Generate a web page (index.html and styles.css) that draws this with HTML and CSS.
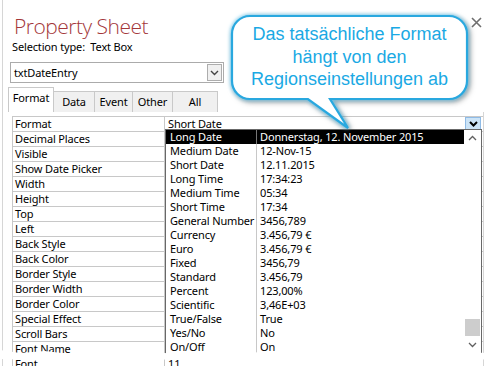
FILE: index.html
```html
<!DOCTYPE html>
<html lang="en">
<head>
  <meta charset="UTF-8" />
  <title>Property Sheet</title>
  <link rel="stylesheet" href="styles.css">
</head>
<body>
  <div class="sheet">
    <h1 class="title">Property Sheet</h1>
    <p class="seltype">Selection type:&nbsp; Text Box</p>

    <div class="combo">
      <span>txtDateEntry</span>
      <span class="combo-btn">
        <svg width="9" height="6" viewBox="0 0 9 6"><path d="M1 1 L4.5 4.5 L8 1" fill="none" stroke="#444" stroke-width="1.4"/></svg>
      </span>
    </div>

    <div class="tabs">
      <div class="tab active" style="width:46px">Format</div>
      <div class="tab" style="width:42px">Data</div>
      <div class="tab" style="width:39px">Event</div>
      <div class="tab" style="width:41px">Other</div>
      <div class="tab" style="width:46px">All</div>
    </div>

    <div class="props">
      <div class="grid">
        <div class="row">
          <div class="k">Format</div>
          <div class="v first">
            <span>Short Date</span>
            <span class="dd-btn">
              <svg width="9" height="6" viewBox="0 0 9 6"><path d="M1 1 L4.5 4.5 L8 1" fill="none" stroke="#000" stroke-width="2"/></svg>
            </span>
          </div>
        </div>
        <div class="row"><div class="k">Decimal Places</div><div class="v"></div></div>
        <div class="row"><div class="k">Visible</div><div class="v"></div></div>
        <div class="row"><div class="k">Show Date Picker</div><div class="v"></div></div>
        <div class="row"><div class="k">Width</div><div class="v"></div></div>
        <div class="row"><div class="k">Height</div><div class="v"></div></div>
        <div class="row"><div class="k">Top</div><div class="v"></div></div>
        <div class="row"><div class="k">Left</div><div class="v"></div></div>
        <div class="row"><div class="k">Back Style</div><div class="v"></div></div>
        <div class="row"><div class="k">Back Color</div><div class="v"></div></div>
        <div class="row"><div class="k">Border Style</div><div class="v"></div></div>
        <div class="row"><div class="k">Border Width</div><div class="v"></div></div>
        <div class="row"><div class="k">Border Color</div><div class="v"></div></div>
        <div class="row"><div class="k">Special Effect</div><div class="v"></div></div>
        <div class="row"><div class="k">Scroll Bars</div><div class="v"></div></div>
        <div class="row"><div class="k">Font Name</div><div class="v"></div></div>
        <div class="row"><div class="k">Font</div><div class="v">11</div></div>
      </div>
    </div>
  </div>

  <!-- open format dropdown -->
  <div class="list">
    <div class="opts">
      <div class="opt sel"><span>Long Date</span><span>Donnerstag, 12. November 2015</span></div>
      <div class="opt"><span>Medium Date</span><span>12-Nov-15</span></div>
      <div class="opt"><span>Short Date</span><span>12.11.2015</span></div>
      <div class="opt"><span>Long Time</span><span>17:34:23</span></div>
      <div class="opt"><span>Medium Time</span><span>05:34</span></div>
      <div class="opt"><span>Short Time</span><span>17:34</span></div>
      <div class="opt"><span>General Number</span><span>3456,789</span></div>
      <div class="opt"><span>Currency</span><span>3.456,79 €</span></div>
      <div class="opt"><span>Euro</span><span>3.456,79 €</span></div>
      <div class="opt"><span>Fixed</span><span>3456,79</span></div>
      <div class="opt"><span>Standard</span><span>3.456,79</span></div>
      <div class="opt"><span>Percent</span><span>123,00%</span></div>
      <div class="opt"><span>Scientific</span><span>3,46E+03</span></div>
      <div class="opt"><span>True/False</span><span>True</span></div>
      <div class="opt"><span>Yes/No</span><span>No</span></div>
      <div class="opt"><span>On/Off</span><span>On</span></div>
    </div>
    <div class="sbar">
      <svg class="arrow" width="9" height="6" viewBox="0 0 9 6"><path d="M1 5 L4.5 1.5 L8 5" fill="none" stroke="#606060" stroke-width="1.3"/></svg>
      <div class="thumb"></div>
      <svg class="arrow" width="9" height="6" viewBox="0 0 9 6"><path d="M1 1 L4.5 4.5 L8 1" fill="none" stroke="#606060" stroke-width="1.3"/></svg>
    </div>
  </div>

  <svg class="close" width="11" height="11" viewBox="0 0 11 11">
    <path d="M1 1 L10 10 M10 1 L1 10" stroke="#6e6e6e" stroke-width="1.6"/>
  </svg>

  <!-- callout -->
  <svg class="bubble" width="262" height="132" viewBox="0 0 262 132">
    <path d="M26 9 H225 A18 18 0 0 1 243 27 V74 A18 18 0 0 1 225 92 H106 L124 121 L84 92 H26 A18 18 0 0 1 8 74 V27 A18 18 0 0 1 26 9 Z"
          fill="#fff" stroke="#29a8df" stroke-width="2.2"/>
  </svg>
  <div class="bubble-text">Das tatsächliche Format<br>hängt von den<br>Regionseinstellungen ab</div>

  <svg class="tear" width="490" height="18" viewBox="0 348 490 18">
    <polygon fill="#fff" points="0,350 20,353 45,351 70,354 95,350 120,353 150,351 180,355 210,352 240,354 270,351 300,354 330,352 360,355 390,351 420,354 450,352 490,353 490,359 460,361 430,358 400,360 370,357 340,360 310,358 280,361 250,358 220,360 190,357 160,360 130,358 100,361 70,358 40,360 0,359"/>
  </svg>
</body>
</html>
```

FILE: styles.css
```css
* {
  box-sizing: border-box;
}

body {
  margin: 0;
  width: 490px;
  height: 366px;
  overflow: hidden;
  background: #fff;
  font-family: "Noto Sans", sans-serif;
  font-size: 11px;
  letter-spacing: -0.15px;
  white-space: nowrap;
  color: #000;
}

.sheet {
  height: 366px;
  margin-left: 2px;
  border-left: 1px solid #d6d6d6;
  padding-top: 12px;
}

.title {
  margin: 0 0 0 11px;
  font-family: "Open Sans", sans-serif;
  font-weight: 300;
  font-size: 21px;
  line-height: 28px;
  letter-spacing: -0.5px;
  color: #a4373a;
}

.seltype {
  margin: 0 0 0 9px;
  line-height: 14px;
}

.combo {
  margin: 8px 0 0 7px;
  width: 214px;
  height: 21px;
  border: 1px solid #ababab;
  display: flex;
  align-items: center;
  justify-content: space-between;
  padding-left: 3px;
}

.combo-btn {
  width: 15px;
  height: 17px;
  margin-right: 1px;
  border: 1px solid #adadad;
  background: #f0f0f0;
  display: flex;
  align-items: center;
  justify-content: center;
}

.tabs {
  display: flex;
  align-items: flex-end;
  margin: 4px 0 0 5px;
  height: 25px;
}

.tab {
  height: 21px;
  border: 1px solid #c9c9c9;
  border-bottom: none;
  background: #f0f0f0;
  text-align: center;
  line-height: 20px;
  margin-right: -1px;
}

.tab.active {
  height: 25px;
  background: #fff;
  line-height: 19px;
  position: relative;
  z-index: 1;
}

.props {
  width: 481px;
  height: 260px;
  border-right: 1px solid #d6d6d6;
  padding: 4px 0 0 9px;
}

.grid {
  border-top: 1px solid #c8c8c8;
  border-left: 1px solid #c8c8c8;
}

.row {
  display: grid;
  grid-template-columns: 152px 1fr;
  height: 15px;
  border-bottom: 1px solid #c8c8c8;
  line-height: 14px;
}

.row .k {
  border-right: 1px solid #c8c8c8;
  padding-left: 2px;
}

.row .v {
  padding-left: 3px;
}

.row .first {
  display: flex;
  justify-content: space-between;
  padding-right: 2px;
}

.dd-btn {
  width: 16px;
  height: 14px;
  background: #cce4f7;
  border: 1px solid #8fbbe6;
  display: flex;
  align-items: center;
  justify-content: center;
}

.list {
  position: absolute;
  left: 165px;
  top: 129px;
  width: 317px;
  height: 227px;
  border: 1px solid #686868;
  background: #fff;
  display: flex;
}

.opts {
  flex: 1;
}

.opt {
  display: grid;
  grid-template-columns: 91px 1fr;
  height: 14px;
  line-height: 14px;
}

.opt span {
  overflow: hidden;
}

.opt span:first-child {
  padding-left: 4px;
  border-right: 1px solid #c8c8c8;
}

.opt span:last-child {
  padding-left: 3px;
}

.opt.sel {
  background: #000;
  color: #fff;
}

.opt.sel span:first-child {
  border-right-color: #777;
}

.sbar {
  width: 17px;
  display: flex;
  flex-direction: column;
  align-items: center;
  padding: 5px 0 4px;
}

.thumb {
  width: 15px;
  height: 17px;
  background: #cdcdcd;
  margin: 178px 0 6px;
}

.close {
  position: absolute;
  left: 471px;
  top: 17px;
}

.bubble {
  position: absolute;
  left: 224px;
  top: 7px;
  filter: drop-shadow(0 0 2px #5cc6f2) drop-shadow(2px 2px 2px rgba(0, 0, 0, 0.35));
}

.bubble-text {
  position: absolute;
  left: 232px;
  top: 23px;
  width: 235px;
  text-align: center;
  font-family: "Liberation Sans", Arial, sans-serif;
  font-size: 18px;
  line-height: 22.5px;
  letter-spacing: 0;
  color: #1aa9e4;
}

.tear {
  position: absolute;
  left: 0;
  top: 348px;
}
```
